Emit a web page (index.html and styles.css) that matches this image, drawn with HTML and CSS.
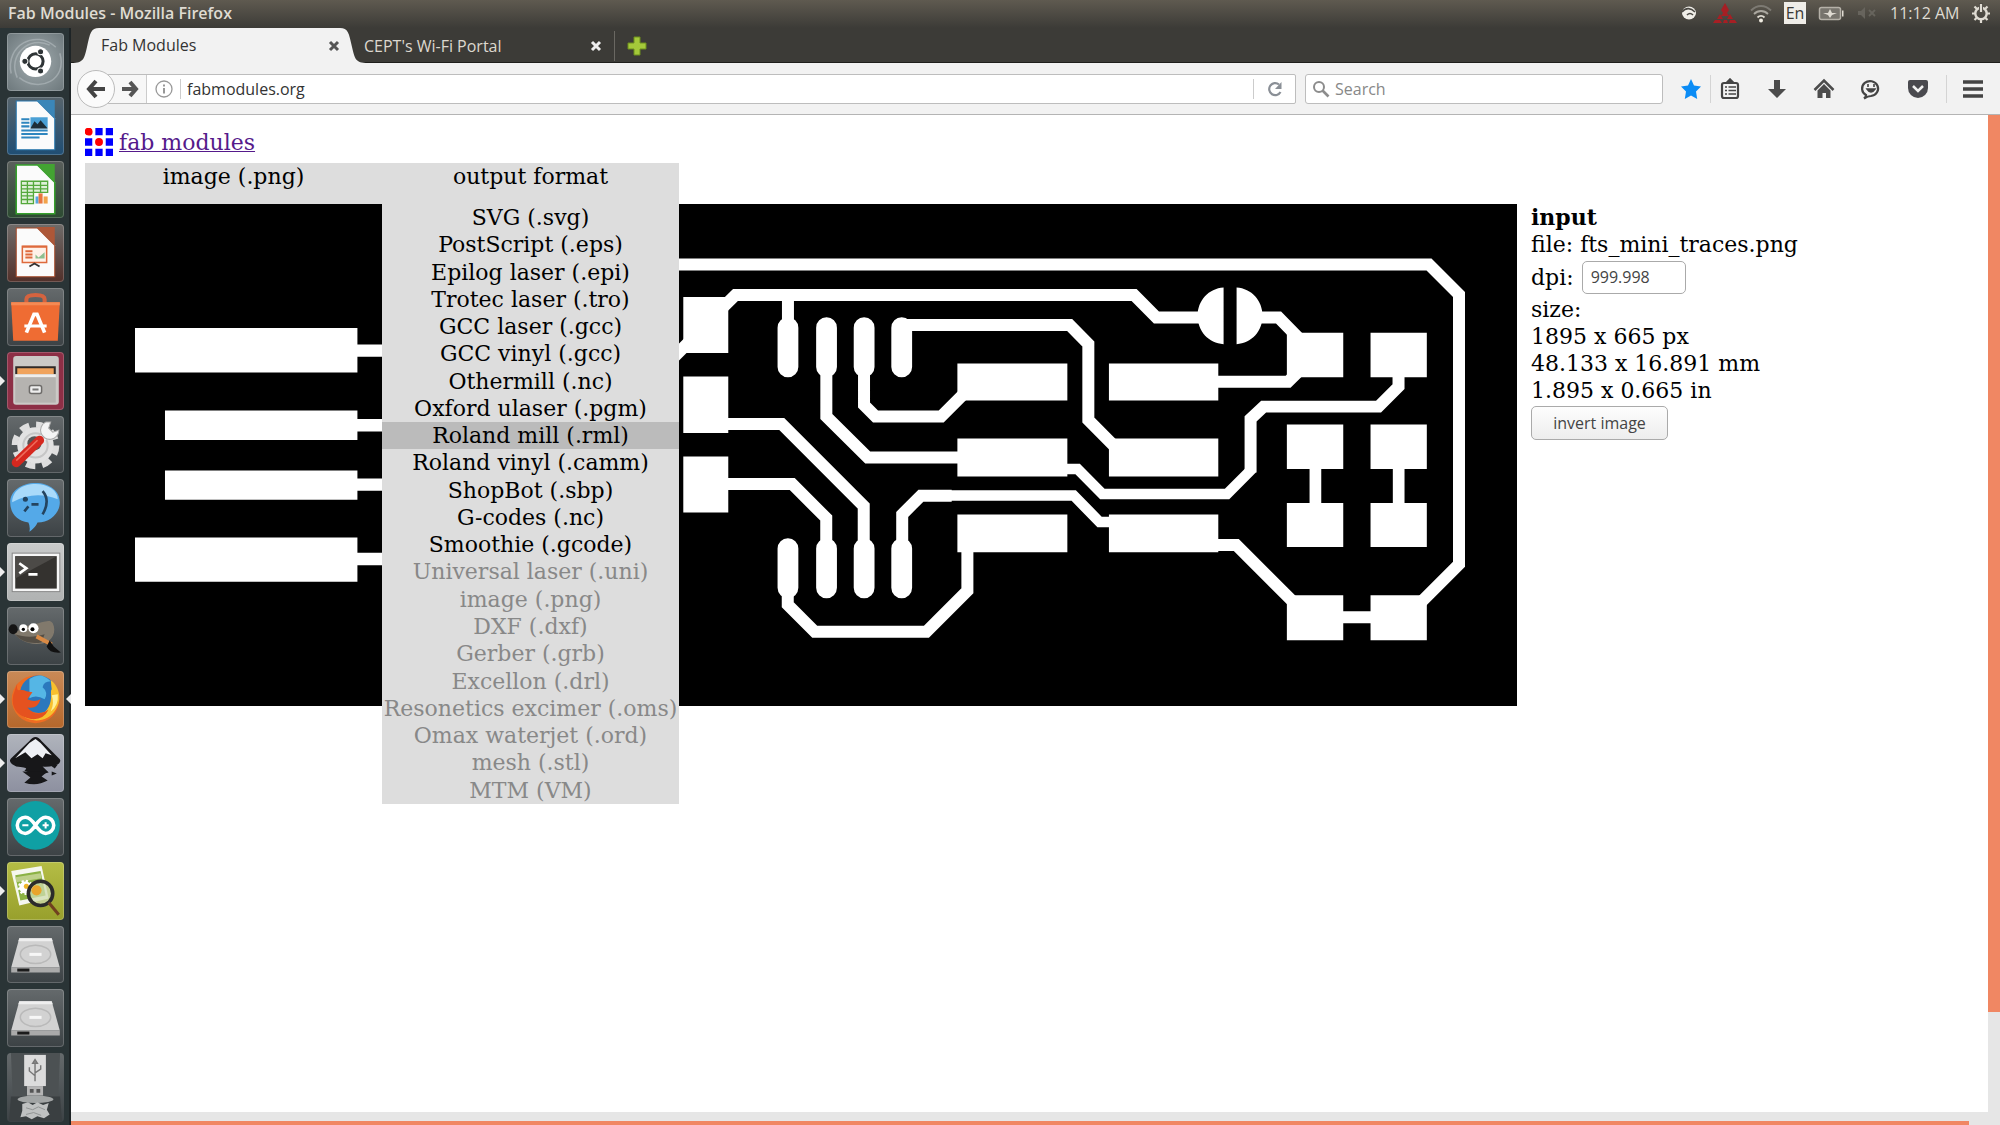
FILE: index.html
```html
<!DOCTYPE html>
<html lang="en">
<head>
<meta charset="utf-8">
<title>Fab Modules - Mozilla Firefox</title>
<link rel="stylesheet" href="styles.css">
</head>
<body>
<div class="desktop">
  <header class="panel">
    <span class="panel-title">Fab Modules - Mozilla Firefox</span>
    <div class="tray">
      <svg class="tray-icon" viewBox="0 0 22 22"><ellipse cx="11" cy="11" rx="7" ry="6.500" fill="#f0eee8"/><path d="M4 10c4-5 9-4 13 0M9 13c2-2 4-2 6 0" fill="none" stroke="#4a4843" stroke-width="1.600"/></svg>
      <svg class="tray-icon wide" viewBox="0 0 26 22"><path d="M13 1l4 7-2 3 2 3h-8l2-3-2-3zM8 12l3 5H5zM18 12l3 5h-6z" fill="#a61f24"/><path d="M1 21l2-3h5l2 3zM11 21l1-3h3l1 3zM17 21l1-3h5l2 3z" fill="#a61f24"/></svg>
      <svg class="tray-icon" viewBox="0 0 22 22"><g fill="none" stroke-width="1.800"><path d="M1 8.500c6-6 14-6 20 0" stroke="#7d7a73"/><path d="M4 12c4-4 10-4 14 0" stroke="#aaa79f"/><path d="M7.500 15.500c2-2 5-2 7 0" stroke="#dfdbd2"/></g><circle cx="11" cy="18.500" r="2" fill="#f0ece2"/></svg>
      <span class="lang">En</span>
      <svg class="tray-icon wide" viewBox="0 0 26 22"><rect x="1.500" y="5.500" width="21" height="12" rx="2" fill="#77746d" stroke="#b5b1a8" stroke-width="1.500"/><path d="M24 8.500h1.500v6H24z" fill="#dfdbd2"/><path d="M5 11h5l2-4 2 4h5l-5 2-2 3-2-3z" fill="#dfdbd2"/></svg>
      <svg class="tray-icon" viewBox="0 0 22 22"><path d="M2 9h3l4-4v12l-4-4H2z" fill="#67645d"/><path d="M13 8l6 6M19 8l-6 6" stroke="#67645d" stroke-width="1.800"/></svg>
      <time class="clock">11:12 AM</time>
      <svg class="tray-icon" viewBox="0 0 22 22"><circle cx="11" cy="11.500" r="5.700" fill="none" stroke="#dfdbd2" stroke-width="2.400"/><path d="M9 1h4v9H9z" fill="#4f4b44"/><path d="M11 2v8M4.500 4.500l2.500 2.500M17.500 4.500L15 7M2 11.500h4M16 11.500h4M4.500 18l2.500-2.500M17.500 18L15 15.500M11 17v4" stroke="#dfdbd2" stroke-width="2.200"/></svg>
    </div>
  </header>

  <nav class="launcher" aria-label="Launcher">
    <button class="tile ash" aria-label="Dash"><svg viewBox="0 0 56 57"><g fill="none" stroke="#b4bcbf" stroke-width="1.500" opacity=".6"><path d="M4 40C-2 12 28-4 48 14M52 20c8 26-20 40-40 24M10 44C0 22 22 2 42 12"/></g><circle cx="28" cy="28" r="15.500" fill="#fff"/><circle cx="28" cy="28" r="7.500" fill="none" stroke="#2e3436" stroke-width="3"/><g fill="#2e3436" stroke="#fff" stroke-width="1"><circle cx="17.500" cy="28" r="3"/><circle cx="33" cy="18.500" r="3"/><circle cx="33" cy="37.500" r="3"/></g></svg></button>
    <button class="tile navy" aria-label="Writer"><svg viewBox="0 0 56 57"><path d="M9 4h21l17 17v31H9z" fill="#fbfbfb" stroke="#2a79b0"/><path d="M29 3h18v18z" fill="#3b86b8"/><g stroke="#2f86bf" stroke-width="2"><path d="M14 22h8M14 25.500h8M14 29h8M14 33h26M14 36.500h26M14 40h18"/></g><path d="M23 20h17v11H23z" fill="#4aa0d5"/><path d="M23 31l4-7 3 3 3-4 7 8z" fill="#1d2e38"/></svg></button>
    <button class="tile green" aria-label="Calc"><svg viewBox="0 0 56 57"><path d="M9 4h21l17 17v31H9z" fill="#fbfbfb" stroke="#36a02c" stroke-width="1.500"/><path d="M29 3h18v18z" fill="#43a332"/><path d="M14 20h26v11H26v11H14z" fill="#dff0d8"/><path d="M14 20h26v11H14zM14 24h26M14 27.500h26M14 31v11h12V31M14 34.500h12M14 38h12M20 20v22M26 20v22M33 20v11" fill="none" stroke="#54a83b" stroke-width="1.300"/><path d="M28 35h3v7h-3z" fill="#5aa6de"/><path d="M31 32h4v10h-4z" fill="#e8753f"/><path d="M36 35h4v7h-4z" fill="#f2a34b"/></svg></button>
    <button class="tile rust" aria-label="Impress"><svg viewBox="0 0 56 57"><path d="M9 4h21l17 17v31H9z" fill="#fbfbfb" stroke="#a84c2b"/><path d="M29 3h18v18z" fill="#ad5738"/><rect x="15" y="22" width="24" height="16" fill="#fff1e8" stroke="#de6a3c" stroke-width="1.500"/><path d="M15 22.500h24M18 30h7M18 33h7M18 27h7" stroke="#de6a3c" stroke-width="2"/><path d="M28 30l3 3 6-5v6h-9z" fill="#8ebf8f"/><path d="M22 42l5-3 5 3" fill="none" stroke="#333" stroke-width="1.800"/></svg></button>
    <button class="tile slate" aria-label="Software"><svg viewBox="0 0 56 57"><path d="M19 15v-4q0-4 9-4t9 4v4" fill="none" stroke="#d4633f" stroke-width="4"/><path d="M4 14h48l-2 38H6z" fill="#ef6c33"/><path d="M4 14h48v3H4z" fill="#f58a54"/><path d="M19 44l7.500-18h3L37 44" fill="none" stroke="#fff" stroke-width="3.600"/><path d="M17 37.500h22" stroke="#fff" stroke-width="3"/></svg></button>
    <button class="tile wine running" aria-label="Files"><svg viewBox="0 0 56 57"><rect x="6" y="4" width="45" height="48" rx="3" fill="#cbc9c6"/><path d="M8 14h40v8H8z" fill="#302a27"/><path d="M10 16h36v6H10z" fill="#f0a35d"/><path d="M8 22h40v3H8z" fill="#efeeec"/><rect x="8" y="25" width="40" height="25" fill="#b5b3b0"/><rect x="22" y="33" width="12" height="8" rx="2" fill="#eee" stroke="#6d6b69" stroke-width="1.500"/><path d="M25 37h6" stroke="#777" stroke-width="2"/></svg></button>
    <button class="tile slate" aria-label="System Settings"><svg viewBox="0 0 56 57"><circle cx="28" cy="29" r="20.500" fill="none" stroke="#dedede" stroke-width="6" stroke-dasharray="9.200 6.900"/><circle cx="28" cy="29" r="18" fill="#e2e2e2"/><circle cx="28" cy="29" r="12" fill="none" stroke="#c6c6c6" stroke-width="2"/><circle cx="27" cy="27" r="7" fill="#555"/><path d="M31 26l8-8" stroke="#eee" stroke-width="7"/><path d="M38 6a9 9 0 1 0 13 8l-6 2-4-4 2-6z" fill="#f4f4f4" stroke="#aaa"/><path d="M9 46l23-22" stroke="#d6281f" stroke-width="9" stroke-linecap="round"/><path d="M9 44l21-20" stroke="#ee6c5c" stroke-width="1.500"/></svg></button>
    <button class="tile slate" aria-label="Chat"><svg viewBox="0 0 56 57"><path d="M28 4c14 0 24 8 24 19S42 43 30 43q-2 5-8 9 1-5-1-9C9 41 3 33 3 23 3 12 14 4 28 4z" fill="#54a9e8"/><path d="M28 5c13 0 22 7 22 15q-23-9-45 3C5 12 15 5 28 5z" fill="#a9dafa"/><circle cx="18" cy="20" r="2.500" fill="#24445f"/><path d="M17 32l4-5M24 25h7M35 12q8 9 0 23" fill="none" stroke="#24445f" stroke-width="2.600"/></svg></button>
    <button class="tile silver running" aria-label="Terminal"><svg viewBox="0 0 56 57"><rect x="5" y="10" width="47" height="38" fill="#f6f6f6" stroke="#888"/><rect x="8" y="13" width="41" height="32" fill="#34322f"/><path d="M8 13h41L8 35z" fill="#4c4a47"/><path d="M12 20l7 5-7 5M21 31h9" fill="none" stroke="#fff" stroke-width="2.600"/></svg></button>
    <button class="tile slate" aria-label="Image editor"><svg viewBox="0 0 56 57"><path d="M5 24c8 1 12-6 21-7 8-1 16-6 19-1 4 8 0 18-10 20-14 2-23-3-30-12z" fill="#81796c"/><path d="M8 27c9 3 19 3 29 0l-3 8c-11 2-21-1-26-8z" fill="#544e45"/><ellipse cx="6" cy="22" rx="4.500" ry="5" fill="#151515"/><circle cx="16" cy="21" r="4" fill="#fff"/><circle cx="26" cy="21" r="5" fill="#fff"/><circle cx="16" cy="22" r="1.600"/><circle cx="25" cy="22" r="2"/><path d="M29 29l15 8" stroke="#d98a45" stroke-width="4"/><path d="M42 33l4 6 7 6q-11 1-14-6z" fill="#111"/></svg></button>
    <button class="tile amber running active" aria-label="Firefox"><svg viewBox="0 0 56 57"><circle cx="28" cy="28" r="23.500" fill="#ef6c22"/><circle cx="31" cy="23" r="18.500" fill="#2b78bd"/><path d="M22 8q11-8 21 2-7 0-8 6 6 5 2 12-8-5-15-1z" fill="#55b6e5"/><path d="M43 9c8 6 12 19 5 29-7 12-23 14-33 6 13 5 24-2 27-11 3-8 0-13 2-15z" fill="#f8c02d"/><path d="M50 23q1 11-7 17 4-8 1-16z" fill="#fff19b"/><path d="M10 12q-1 6 1 7 5-1 8 1l6 1-5 7q7 3 13 0-3 10-13 8Q29 47 41 38 35 50 21 47 3 42 6 24z" fill="#e5521f"/></svg></button>
    <button class="tile pewter running" aria-label="Inkscape"><svg viewBox="0 0 56 57"><path d="M28 3q3 0 6 4l18 18q2 4-5 6-8 2-12 1l6 6q-13 4-24-2 6-3-8-4Q0 28 4 24L22 7q3-4 6-4z" fill="#171719"/><path d="M28 5l5 4 11 12-6-2-3 5-5-4-6 4-6-6-10 6L22 9z" fill="#eef0f4"/><path d="M15 37h25l-6 5 6 4q-11 6-23 2l6-5zM44 37l5 2-5 2zM43 31l7-1-3 4z" fill="#171719"/></svg></button>
    <button class="tile slate" aria-label="Arduino"><svg viewBox="0 0 56 57"><circle cx="28" cy="27" r="24" fill="#0fa0a4"/><path d="M28 27c-4-6-7-8-10-8a8 8 0 0 0 0 16c3 0 6-2 10-8s7-8 10-8a8 8 0 0 1 0 16c-3 0-6-2-10-8z" fill="none" stroke="#fff" stroke-width="3.500"/><path d="M15 27h6M35 27h6M38 24v6" stroke="#fff" stroke-width="2"/></svg></button>
    <button class="tile lime running" aria-label="Image viewer"><svg viewBox="0 0 56 57"><path d="M4 9l30-5 7 32-29 7z" fill="#f6f7ef"/><path d="M8 13l25-4 5 24-25 5z" fill="#8bb244"/><path d="M8 15l25-4 1 5-25 4z" fill="#bed08a"/><circle cx="18" cy="25" r="6" fill="#fff" stroke="#fff" stroke-width="3" stroke-dasharray="2 2"/><circle cx="19" cy="24" r="2.500" fill="#efb529"/><circle cx="33" cy="31" r="12" fill="#cfdcb0" fill-opacity=".75" stroke="#2b2b2b" stroke-width="3.500"/><circle cx="29" cy="28" r="5" fill="#e8a42c"/><path d="M41 40l10 12" stroke="#70401f" stroke-width="3"/></svg></button>
    <button class="tile slate" aria-label="Volume 1"><svg viewBox="0 0 56 57"><path d="M12 12h32l8 29H4z" fill="#d2d2d2"/><path d="M12 12h32l1 3H11z" fill="#efefef"/><ellipse cx="28" cy="28" rx="15" ry="9" fill="none" stroke="#b9b9b9" stroke-width="1.500"/><path d="M22 28h12" stroke="#f7f7f7" stroke-width="3"/><path d="M4 41h48v5H4z" fill="#aaa"/><path d="M10 42h12v3H10z" fill="#1b1b1b"/></svg></button>
    <button class="tile slate" aria-label="Volume 2"><svg viewBox="0 0 56 57"><path d="M12 12h32l8 29H4z" fill="#d2d2d2"/><path d="M12 12h32l1 3H11z" fill="#efefef"/><ellipse cx="28" cy="28" rx="15" ry="9" fill="none" stroke="#b9b9b9" stroke-width="1.500"/><path d="M22 28h12" stroke="#f7f7f7" stroke-width="3"/><path d="M4 41h48v5H4z" fill="#aaa"/><path d="M10 42h12v3H10z" fill="#1b1b1b"/></svg></button>
    <button class="tile slate stack" aria-label="USB drive and trash"><svg viewBox="0 0 56 73"><path d="M2 0h52l-2 46H4z" fill="#4c5153"/><path d="M16 2h23v33H16z" fill="#dcdcdc"/><path d="M27.500 30V9M27.500 24l-6-5v-4M27.500 21l6-4v-4M25 11l2.500-4 2.500 4z" stroke="#777" stroke-width="1.500" fill="none"/><path d="M19 35h17v10H19z" fill="#b5b5b5"/><path d="M22 38h4v4h-4zM29 38h4v4h-4z" fill="#555"/><path d="M2 46h52l2 26H0z" fill="#3a3f41"/><ellipse cx="28" cy="49" rx="19" ry="4" fill="#a2a5a5"/><path d="M14 54l6-2 5 3 5-3 6 3 6-2-2 7 3 5-6 4-7-2-6 3-6-3-6 1 2-7z" fill="#bfc1c1"/><path d="M18 58l7 2 6-3 7 3M18 65l8-2 8 3" stroke="#8d9090" fill="none"/></svg></button>
  </nav>

  <main class="browser">
    <div class="tabs">
      <div class="tab current">
        <svg class="tab-edge" viewBox="0 0 28 35"><path d="M0 35C13 35 13 31 16 19 19 5 20 0 28 0V35z" fill="#f2f2f2"/></svg>
        <div class="tab-body"><span class="tab-label">Fab Modules</span><button class="tab-close" aria-label="Close tab"><svg viewBox="0 0 12 12"><path d="M2 2l8 8M10 2l-8 8" stroke="currentColor" stroke-width="3"/></svg></button></div>
        <svg class="tab-edge" viewBox="0 0 28 35"><path d="M28 35C15 35 15 31 12 19 9 5 8 0 0 0V35z" fill="#f2f2f2"/></svg>
      </div>
      <div class="tab other"><span class="tab-label">CEPT's Wi-Fi Portal</span><button class="tab-close" aria-label="Close tab"><svg viewBox="0 0 12 12"><path d="M2 2l8 8M10 2l-8 8" stroke="currentColor" stroke-width="3"/></svg></button></div>
      <button class="new-tab" aria-label="New tab"><svg viewBox="0 0 20 20"><path d="M7 1h6v6h6v6h-6v6H7v-6H1V7h6z" fill="#a4c93a" stroke="#6d8f1c"/></svg></button>
    </div>

    <div class="toolbar">
      <button class="back" aria-label="Back"><svg viewBox="0 0 20 20"><path d="M10 2l-7 8 7 8M4 10h15" fill="none" stroke="#444" stroke-width="4"/></svg></button>
      <div class="address">
        <button class="forward" aria-label="Forward"><svg viewBox="0 0 18 18"><path d="M9 2l6 7-6 7M15 9H1" fill="none" stroke="#555" stroke-width="4"/></svg></button>
        <span class="site-info"><svg viewBox="0 0 18 18"><circle cx="9" cy="9" r="8" fill="none" stroke="#999" stroke-width="1.300"/><path d="M9 8v5.500M9 4.500v2" stroke="#777" stroke-width="1.500"/></svg></span>
        <input class="url" type="text" value="fabmodules.org" aria-label="Address">
        <button class="reload" aria-label="Reload"><svg viewBox="0 0 18 18"><path d="M13 4.500A6 6 0 1 0 14.500 12" fill="none" stroke="#8a8f96" stroke-width="2.200"/><path d="M15.500 2v7H9z" fill="#8a8f96"/></svg></button>
      </div>
      <label class="search"><svg viewBox="0 0 18 18"><circle cx="7" cy="7" r="5" fill="none" stroke="#8c8c8c" stroke-width="2"/><path d="M10.500 10.500l6 6" stroke="#8c8c8c" stroke-width="2.600"/></svg><input type="text" placeholder="Search" aria-label="Search"></label>
      <div class="tools">
        <button class="tool star" aria-label="Bookmark"><svg viewBox="0 0 22 22"><path d="M11 1l3 6.500 7 1-5 5 1.200 7.500L11 17.500 4.800 21 6 13.500l-5-5 7-1z" fill="#0b8cf5"/></svg></button>
        <button class="tool" aria-label="Bookmarks list"><svg viewBox="0 0 22 22"><rect x="3" y="5" width="16" height="15" rx="2" fill="none" stroke="#444" stroke-width="2.200"/><path d="M7 5l4-4 4 4zM6 9h2M6 12.500h2M6 16h2M9.500 9H17M9.500 12.500H17M9.500 16H17" fill="#444" stroke="#444" stroke-width="1.600"/></svg></button>
        <button class="tool" aria-label="Downloads"><svg viewBox="0 0 22 22"><path d="M8 2h6v9h6l-9 9-9-9h6z" fill="#4c4c4c"/></svg></button>
        <button class="tool" aria-label="Home"><svg viewBox="0 0 22 22"><path d="M1.500 12L11 2.500l9.500 9.500" fill="none" stroke="#4c4c4c" stroke-width="2.500"/><path d="M4.500 12.500L11 6l6.500 6.500V20H13v-5H9.500v5h-5z" fill="#4c4c4c"/></svg></button>
        <button class="tool" aria-label="Chat"><svg viewBox="0 0 22 22"><path d="M6 17a8 7.500 0 1 1 5 1q-3 0-7 2.500 2-1.500 2-3.500z" fill="none" stroke="#444" stroke-width="2.200"/><path d="M7 11q4 6 8 0zM8 6v3M14 6v3" fill="#444" stroke="#444" stroke-width="1.600"/></svg></button>
        <button class="tool" aria-label="Pocket"><svg viewBox="0 0 22 22"><path d="M3 2h16q2 0 2 2v6a10 10 0 0 1-20 0V4q0-2 2-2z" fill="#4a4a4f"/><path d="M6 8l5 5 5-5" fill="none" stroke="#f2f2f2" stroke-width="2.500"/></svg></button>
        <button class="tool hamburger" aria-label="Menu"><svg viewBox="0 0 22 22"><path d="M1 4h20M1 11h20M1 18h20" stroke="#444" stroke-width="3.500"/></svg></button>
      </div>
    </div>

    <div class="viewport">
      <div class="page">
        <div class="brand">
          <svg class="brand-logo" viewBox="0 0 27 27"><g fill="#00f"><path d="M10 0h7v7h-7zM20 0h7v7h-7zM0 10h7v7H0zM20 10h7v7h-7zM0 20h7v7H0zM10 20h7v7h-7zM20 20h7v7h-7z"/></g><circle cx="3.500" cy="3.500" r="3.800" fill="#f00"/><circle cx="13.500" cy="13.500" r="3.800" fill="#f00"/></svg>
          <a href="#">fab modules</a>
        </div>
        <div class="menubar">
          <div class="menu">image (.png)</div>
          <div class="menu">output format
            <ul class="options">
              <li>SVG (.svg)</li><li>PostScript (.eps)</li><li>Epilog laser (.epi)</li><li>Trotec laser (.tro)</li><li>GCC laser (.gcc)</li><li>GCC vinyl (.gcc)</li><li>Othermill (.nc)</li><li>Oxford ulaser (.pgm)</li><li class="hover">Roland mill (.rml)</li><li>Roland vinyl (.camm)</li><li>ShopBot (.sbp)</li><li>G-codes (.nc)</li><li>Smoothie (.gcode)</li>
              <li class="off">Universal laser (.uni)</li><li class="off">image (.png)</li><li class="off">DXF (.dxf)</li><li class="off">Gerber (.grb)</li><li class="off">Excellon (.drl)</li><li class="off">Resonetics excimer (.oms)</li><li class="off">Omax waterjet (.ord)</li><li class="off">mesh (.stl)</li><li class="off">MTM (VM)</li>
            </ul>
          </div>
        </div>
        <div class="work">
          <svg class="board" viewBox="85 203.500 1432.500 502.500">
            <path d="M85 203h1433v504H85z"/>
            <g fill="#fff">
              <path d="M135 327.500h222.500V372H135zM165 410h192.500v29.500H165zM165 470h192.500v29.300H165zM135 537h222.500v44.300H135z"/>
              <path d="M357 344h30v12.300h-30zM357 418.500h30V431h-30zM357 478h30v12.300h-30zM357 552.500h30v12.500h-30z"/>
              <path d="M683.500 296.500h45v56h-45zM683.500 376h45v56.500h-45zM683.500 456h45v56h-45z"/>
              <path d="M957.700 363h110v37h-110zM957.700 438h110v38h-110zM957.700 514h110v38h-110zM1109.300 363h109.400v37h-109.400zM1109.300 438h109.400v38h-109.400zM1109.300 514h109.400v38h-109.400z"/>
              <path d="M1287.300 332.300h56.400v44.400h-56.400zM1371 332.300h56.300v44.400H1371zM1287.300 424h56.400v44.700h-56.400zM1371 424h56.300v44.700H1371zM1287.300 502.700h56.400v44h-56.400zM1371 502.700h56.300v44H1371zM1287.300 595h56.400v45h-56.400zM1371 595h56.300v45H1371z"/>
              <path d="M1310 468h11.700v35H1310zM1393.300 468h11.700v35h-11.700zM1343 611h29v12h-29z"/>
              <path d="M1224 287c-15 1-26 13-26 28.400s11 27.600 26 28.300zM1237 287c15 1 26 13 26 28.400s-11 27.600-26 28.300z"/>
            </g>
            <g fill="none" stroke="#fff" stroke-width="12">
              <path d="M660 264h769.500l30 30v270L1422 601.500"/>
              <path d="M723 307l12.700-12.500h398.800l22.300 22.500H1205M1258 317h21l21 21.500M669 361.700l21-21M788.200 298v30"/>
              <path d="M826.600 365v51l41.400 41.200h92M864.300 365v39.500l11.500 11.500H941.500l22-22M902 324.500h168l18.700 19v76L1114 445"/>
              <path d="M725 423.500h57L864 505.700V560M725 483.700h67.500L826.500 517.700V560M902.500 560v-46l18.700-18.700H952"/>
              <path d="M788 585v19.500L815 631.300H926.700L967.700 590.300V550M1215 381.300h73.500L1301 369M1215 544.700h21.700L1295 603M1251 472v-53.500L1264 406.200H1379L1399 386.200V375"/>
            </g>
            <g fill="none" stroke="#fff" stroke-width="10.500">
              <path d="M1065 468.700h13l24.700 24.800H1227.500L1251 470v-10M950 495h124l26 26.700h12"/>
            </g>
            <path d="M788.200 327.200v39.300M826.800 327.200v39.300M864.400 327.200v39.300M902 327.200v39.300M788.200 548.200v39.300M826.800 548.200v39.300M864.400 548.200v39.300M902 548.200v39.300" stroke="#fff" stroke-width="20.800" stroke-linecap="round"/>
          </svg>
          <form class="details">
            <b>input</b>
            <span>file: fts_mini_traces.png</span>
            <span class="dpi"><label for="dpi">dpi:</label><input id="dpi" type="text" value="999.998"></span>
            <span>size:</span>
            <span>1895 x 665 px</span>
            <span>48.133 x 16.891 mm</span>
            <span>1.895 x 0.665 in</span>
            <button type="button" class="invert">invert image</button>
          </form>
        </div>
      </div>
      <div class="scroll-y"><div class="thumb"></div></div>
      <div class="scroll-x"><div class="thumb"></div></div>
    </div>
  </main>
</div>
</body>
</html>
```
FILE: styles.css
```css
* { box-sizing: border-box; }
body { margin: 0; background: #fff; font-family: "Open Sans", "Noto Sans", sans-serif; font-size: 16px; color: #333; }
button, input { font: inherit; color: inherit; margin: 0; padding: 0; border: 0; background: none; }
svg { display: block; }

.desktop {
  display: grid;
  grid-template: 28px minmax(0, 1fr) / 71px minmax(0, 1fr);
  min-height: 100vh;
}

/* Top panel */
.panel {
  grid-column: 1 / 3;
  display: flex;
  align-items: center;
  justify-content: space-between;
  padding: 0 8px 2px;
  background: linear-gradient(#5f5a50, #3c3b37);
  color: #dfdbd2;
}
.panel-title { font-size: 16px; font-weight: 600; line-height: 26px; }
.tray { display: flex; align-items: center; gap: 12px; }
.tray-icon { width: 22px; height: 22px; }
.tray-icon.wide { width: 26px; }
.lang { width: 22px; height: 22px; background: #efede8; color: #3c3b37; text-align: center; line-height: 22px; }
.clock { line-height: 26px; width: 68px; white-space: nowrap; font-size: 16px; }

/* Launcher */
.launcher {
  display: flex;
  flex-direction: column;
  gap: 6px;
  padding: 5px 7px 3px;
  background: #2a3436;
  border-right: 2px solid #1e2426;
}
.launcher .tile { margin-right: -2px; }
.tile { position: relative; flex: 1 1 0; min-height: 0; border-radius: 4px; box-shadow: inset 0 0 0 1px #ffffff33; }
.tile svg { width: 100%; height: 100%; }
.launcher .stack { flex: 0 0 69px; box-shadow: none; }
.ash { background: radial-gradient(#a3adb0, #6c777b); }
.navy { background: linear-gradient(#57646c, #1f4e74); }
.green { background: linear-gradient(#5a5f5c, #2c4a31); }
.rust { background: linear-gradient(#6f6b69, #52302a); }
.slate { background: linear-gradient(#656a6c, #3c4245); }
.wine { background: #8d2f46; }
.silver { background: linear-gradient(#c9cbcb, #b0b2b2); }
.amber { background: linear-gradient(#c98a57, #b5672b); }
.pewter { background: linear-gradient(#b0b4bc, #8d90a0); }
.lime { background: linear-gradient(#b5bd45, #98a02c); }
.running::before, .active::after {
  content: "";
  position: absolute;
  top: 50%;
  margin-top: -5px;
  border: 5px solid transparent;
}
.running::before { left: -7px; border-left-color: #eee; border-right-width: 0; }
.active::after { right: -7px; border-right-color: #eee; border-left-width: 0; }

/* Tabs */
.browser { display: flex; flex-direction: column; min-width: 0; }
.tabs { display: flex; height: 35px; background: #3c3b37; border-bottom: 1px solid #1f1f1c; }
.tab { display: flex; align-items: center; }
.tab.current { height: 35px; }
.tab-edge { width: 28px; height: 35px; }
.tab-body { display: flex; align-items: center; justify-content: space-between; width: 241px; height: 35px; padding-left: 2px; background: #f2f2f2; }
.tab-label { font-size: 16px; line-height: 30px; white-space: nowrap; }
.tab-close { width: 12px; height: 12px; color: #555; }
.tab-body .tab-label { line-height: 36px; padding-bottom: 2px; }
.tab.other { width: 251px; justify-content: space-between; padding-right: 12px; margin: 3px 0 0 -4px; height: 30px; color: #dcd8cf; border-right: 1px solid #6a6862; }
.tab.other .tab-close { color: #eee; }
.new-tab { width: 20px; height: 20px; margin: 8px 12px; }

/* Toolbar */
.toolbar { display: flex; align-items: center; height: 52px; padding: 0 16px 0 6px; background: #f2f2f2; border-bottom: 1px solid #b4b4b4; }
.back { display: grid; place-items: center; width: 38px; height: 38px; border: 1px solid #bbb; border-radius: 50%; background: #fbfbfb; z-index: 1; }
.back svg { width: 20px; height: 20px; }
.address { flex: 1; display: flex; align-items: center; height: 30px; margin-left: -8px; border: 1px solid #bdbdbd; border-radius: 2px; background: #fff; }
.forward { display: grid; place-items: center; width: 39px; height: 28px; padding-left: 6px; background: #f7f7f7; border-right: 1px solid #ccc; }
.forward svg { width: 18px; height: 18px; }
.site-info { width: 34px; height: 20px; padding: 1px 8px; border-right: 1px solid #ccc; }
.site-info svg { width: 18px; height: 18px; }
.url { flex: 1; min-width: 0; padding-left: 6px; font-size: 16px; }
.reload { display: grid; place-items: center; width: 42px; height: 20px; border-left: 1px solid #ccc; }
.reload svg { width: 18px; height: 18px; }
.search { display: flex; align-items: center; gap: 5px; width: 358px; height: 30px; margin-left: 9px; padding-left: 6px; border: 1px solid #bdbdbd; border-radius: 3px; background: #fff; }
.search svg { width: 18px; height: 18px; }
.search input { flex: 1; min-width: 0; font-size: 16px; }
.search input::placeholder { color: #888; opacity: 1; }
.tools { display: flex; align-items: center; margin-left: 16px; }
.tool { display: grid; place-items: center; width: 47px; height: 28px; }
.tool svg { width: 22px; height: 22px; }
.star { width: 32px; padding-right: 8px; border-right: 1px solid #d4d4d4; margin-right: -5px; }
.hamburger { width: 38px; padding-left: 14px; margin-left: 5px; border-left: 1px solid #d4d4d4; }

/* Page area with its scrollbars */
.viewport { flex: 1; display: grid; grid-template: minmax(0, 1fr) 13px / minmax(0, 1fr) 12px; background: #e6e6e6; }
.page { padding: 12px 14px 0; background: #fff; font: 22px/27px "DejaVu Serif", "Liberation Serif", serif; color: #000; }
.scroll-y .thumb { height: 90%; background: #f08763; }
.scroll-x { padding-top: 9px; }
.scroll-x .thumb { height: 4px; width: 99%; background: #f08763; }

.brand { display: flex; align-items: center; gap: 6px; height: 36px; padding-bottom: 6px; }
.brand-logo { width: 28px; height: 28px; }
.brand a { color: #551a8b; text-decoration-thickness: 1px; }

.menubar { display: grid; grid-template-columns: 297px 297px; width: max-content; background: #ddd; text-align: center; }
.menu { position: relative; height: 41px; white-space: nowrap; }
.options { position: absolute; z-index: 1; top: 100%; left: 0; right: 0; display: flex; flex-direction: column; height: 600px; margin: 0; padding: 0; list-style: none; background: #ddd; }
.options li { flex: 1; }
.options .hover { background: #bbb; }
.options .off { color: #888; }

.work { display: flex; align-items: flex-start; gap: 14px; }
.board { flex: 0 1 1432px; min-width: 0; }
.details { flex: 0 0 auto; display: flex; flex-direction: column; align-items: flex-start; white-space: nowrap; }
.dpi { display: flex; align-items: center; gap: 8px; height: 38px; }
.dpi input { width: 104px; height: 33px; padding: 0 8px; border: 1px solid #aaa; border-radius: 5px; background: #fff; font: 16px "Open Sans", sans-serif; color: #444; }
.invert { width: 137px; height: 34px; margin-top: 2px; border: 1px solid #aaa; border-radius: 5px; background: linear-gradient(#fdfdfd, #ededed); font: 16px "Open Sans", sans-serif; color: #444; }
```
